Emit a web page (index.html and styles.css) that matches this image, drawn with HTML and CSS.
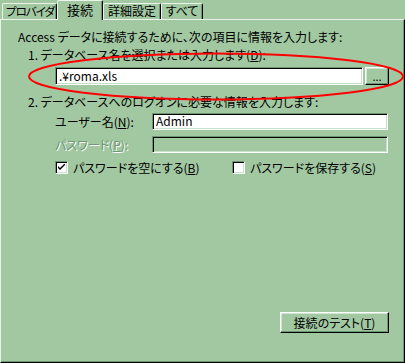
FILE: index.html
```html
<!DOCTYPE html>
<html>
<head>
    <title>データ リンク プロパティ</title>
    <link rel="stylesheet" href="styles.css">
</head>
<body>
    <div class="dialog">
        <div class="tabs">
            <div class="tab t1">プロバイダ</div>
            <div class="tab t2 active">接続</div>
            <div class="tab t3">詳細設定</div>
            <div class="tab t4">すべて</div>
        </div>
        <div class="panel">
            <p class="intro">Access データに接続するために、次の項目に情報を入力します:</p>
            <p class="step">1. データベース名を選択または入力します(<u>D</u>):</p>
            <div class="db-row">
                <div class="field db">.¥roma.xls</div>
                <button class="btn browse">...</button>
            </div>
            <p class="step step2">2. データベースへのログオンに必要な情報を入力します:</p>
            <div class="login">
                <label>ユーザー名(<u>N</u>):</label>
                <div class="field">Admin</div>
                <label class="disabled">パスワード(<u>P</u>):</label>
                <div class="field off"></div>
            </div>
            <div class="checks">
                <label class="check">
                    <span class="box">
                        <svg width="7" height="7" viewBox="0 0 7 7"><path d="M0 2 L0 4 L2 6 L7 1 L7 -1 L2 4 Z" fill="#000"/></svg>
                    </span>
                    <span>パスワードを空にする(<u>B</u>)</span>
                </label>
                <label class="check">
                    <span class="box"></span>
                    <span>パスワードを保存する(<u>S</u>)</span>
                </label>
            </div>
            <div class="actions">
                <button class="btn test">接続のテスト(<u>T</u>)</button>
            </div>
        </div>
        <!-- red annotation ring drawn over the dialog -->
        <svg class="mark" width="405" height="363">
            <ellipse cx="216" cy="76.5" rx="187" ry="23" fill="none" stroke="#ff0000" stroke-width="2"/>
        </svg>
    </div>
</body>
</html>
```

FILE: styles.css
```css
body { margin: 0; background: #a2c8a2; font-family: "Noto Sans CJK JP", sans-serif; font-size: 12px; color: #000; font-feature-settings: "palt"; }
u { text-decoration: underline; text-underline-offset: 1px; }
.dialog { position: relative; width: 405px; height: 363px; }

/* tabs */
.tabs { display: flex; align-items: flex-end; height: 19px; padding-left: 2px; }
.tab {
    box-sizing: border-box; height: 16px; line-height: 14px; text-align: center; white-space: nowrap;
    border-top: 1px solid #eaf4ea; border-left: 1px solid #eaf4ea; border-right: 1px solid #000;
    box-shadow: inset -1px 0 #6e9672; border-radius: 2px 2px 0 0;
}
.t1 { width: 55px; font-size: 11.5px; letter-spacing: -1px; text-align: left; padding-left: 3px; }
.t2 { width: 46px; }
.t3 { width: 58px; }
.t4 { width: 42px; }
.tab.active { height: 20px; line-height: 17px; margin-bottom: -1px; position: relative; background: #a2c8a2; font-size: 13px; }

/* panel */
.panel {
    box-sizing: border-box; height: 344px; padding: 10px 0 0 17px;
    border-top: 1px solid #eaf4ea; border-left: 1px solid #eaf4ea;
    border-right: 1px solid #000; border-bottom: 1px solid #000;
    box-shadow: inset -1px -1px #6e9672;
}
.intro, .step { margin: 0; height: 14px; line-height: 14px; white-space: nowrap; }
.step { margin: 4px 0 0 10px; }
.step2 { margin-top: 10px; }

.field {
    box-sizing: border-box; height: 18px; line-height: 15px; padding: 0 3px; background: #fff;
    border-top: 1px solid #6e9672; border-left: 1px solid #6e9672;
    border-bottom: 1px solid #fff; border-right: 1px solid #fff;
    box-shadow: inset 1px 1px #000, inset -1px -1px #c8e0c8;
}
.field.off { background: #a2c8a2; }

.btn {
    box-sizing: border-box; background: #a2c8a2; font: inherit; padding: 0; color: #000;
    border: 1px solid; border-color: #fff #000 #000 #fff;
    box-shadow: inset -1px -1px #6e9672, inset 1px 1px #d0e6d0;
}

.db-row { display: flex; gap: 2px; margin: 5px 0 0 37px; }
.db { width: 308px; }
.browse { width: 24px; height: 18px; line-height: 10px; font-size: 11px; }

.login { display: grid; grid-template-columns: 97px 236px; row-gap: 6px; margin: 4px 0 0 37px; }
.login label { line-height: 17px; }
.login .field { height: 17px; line-height: 14px; }
.disabled { color: #6e9672; text-shadow: 1px 1px #fff; }

.checks { display: grid; grid-template-columns: 177px auto; margin: 8px 0 0 37px; height: 13px; }
.check { display: flex; align-items: center; gap: 5px; line-height: 13px; white-space: nowrap; }
.box {
    box-sizing: border-box; width: 13px; height: 13px; background: #fff;
    display: flex; align-items: center; justify-content: center;
    border-top: 1px solid #6e9672; border-left: 1px solid #6e9672;
    border-bottom: 1px solid #fff; border-right: 1px solid #fff;
    box-shadow: inset 1px 1px #000, inset -1px -1px #c8e0c8;
}

.actions { display: flex; justify-content: flex-end; padding-right: 15px; margin-top: 138px; }
.test { width: 109px; height: 21px; line-height: 18px; }

.mark { position: absolute; left: 0; top: 0; pointer-events: none; }
```
